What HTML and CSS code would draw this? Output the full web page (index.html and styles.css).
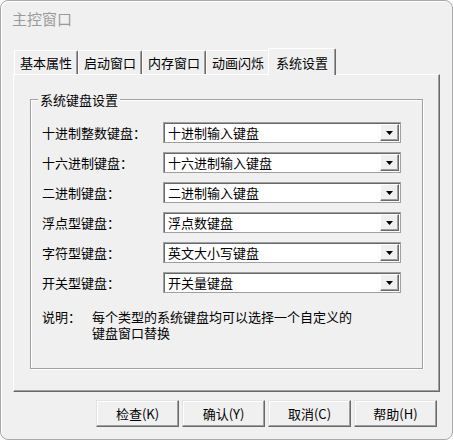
FILE: index.html
```html
<!DOCTYPE html>
<html lang="zh-CN">
<head>
<meta charset="utf-8">
<title>主控窗口</title>
<link rel="stylesheet" href="styles.css">
</head>
<body>
<div class="window">
  <div class="titlebar"><span class="title">主控窗口</span></div>
  <div class="tabs">
    <div class="tab">基本属性</div>
    <div class="tab">启动窗口</div>
    <div class="tab">内存窗口</div>
    <div class="tab">动画闪烁</div>
    <div class="tab active">系统设置</div>
  </div>
  <div class="panel">
    <fieldset class="group">
      <legend>系统键盘设置</legend>
      <div class="row"><span class="label">十进制整数键盘：</span><div class="combo"><span class="value">十进制输入键盘</span><span class="drop"><svg width="7" height="4" viewBox="0 0 7 4"><polygon points="0,0 7,0 3.5,4" fill="#000"/></svg></span></div></div>
      <div class="row"><span class="label">十六进制键盘：</span><div class="combo"><span class="value">十六进制输入键盘</span><span class="drop"><svg width="7" height="4" viewBox="0 0 7 4"><polygon points="0,0 7,0 3.5,4" fill="#000"/></svg></span></div></div>
      <div class="row"><span class="label">二进制键盘：</span><div class="combo"><span class="value">二进制输入键盘</span><span class="drop"><svg width="7" height="4" viewBox="0 0 7 4"><polygon points="0,0 7,0 3.5,4" fill="#000"/></svg></span></div></div>
      <div class="row"><span class="label">浮点型键盘：</span><div class="combo"><span class="value">浮点数键盘</span><span class="drop"><svg width="7" height="4" viewBox="0 0 7 4"><polygon points="0,0 7,0 3.5,4" fill="#000"/></svg></span></div></div>
      <div class="row"><span class="label">字符型键盘：</span><div class="combo"><span class="value">英文大小写键盘</span><span class="drop"><svg width="7" height="4" viewBox="0 0 7 4"><polygon points="0,0 7,0 3.5,4" fill="#000"/></svg></span></div></div>
      <div class="row"><span class="label">开关型键盘：</span><div class="combo"><span class="value">开关量键盘</span><span class="drop"><svg width="7" height="4" viewBox="0 0 7 4"><polygon points="0,0 7,0 3.5,4" fill="#000"/></svg></span></div></div>
      <div class="note"><span class="note-label">说明：</span><span class="note-text">每个类型的系统键盘均可以选择一个自定义的<br>键盘窗口替换</span></div>
    </fieldset>
  </div>
  <div class="buttons">
    <div class="btn">检查(K)</div>
    <div class="btn">确认(Y)</div>
    <div class="btn">取消(C)</div>
    <div class="btn">帮助(H)</div>
  </div>
</div>
</body>
</html>
```
FILE: styles.css
```css
html, body {
  margin: 0;
  background: #ffffff;
}
body {
  font-family: "Noto Sans CJK SC", "Noto Sans", sans-serif;
  font-size: 13px;
  color: #000;
}
.window {
  box-sizing: border-box;
  width: 453px;
  height: 440px;
  border: 1px solid #a9a9a9;
  border-radius: 8px;
  background: #f0f0f0;
  box-shadow: inset 1px 1px 0 #ffffff;
  overflow: hidden;
}
.titlebar {
  height: 47px;
  padding-left: 11px;
  display: flex;
  align-items: flex-start;
}
.title {
  font-size: 15px;
  line-height: 20px;
  margin-top: 8px;
  color: #9a9a9a;
}
.tabs {
  display: flex;
  align-items: flex-end;
  height: 26px;
  margin-left: 13px;
}
.tab {
  box-sizing: border-box;
  height: 24px;
  padding: 0 5px;
  border-left: 1px solid #ffffff;
  border-top: 1px solid #ffffff;
  border-right: 1px solid #696969;
  box-shadow: inset -1px 0 0 #a0a0a0;
  border-radius: 2px 2px 0 0;
  display: flex;
  align-items: center;
  line-height: 15px;
  background: #f0f0f0;
}
.tab.active {
  height: 27px;
  padding: 0 7px;
  margin: 0 -2px -1px -2px;
  position: relative;
  z-index: 1;
}
.panel {
  box-sizing: border-box;
  width: 427px;
  height: 318px;
  margin-left: 12px;
  border: 1px solid;
  border-color: #ffffff #696969 #696969 #ffffff;
  box-shadow: inset -1px -1px 0 #a0a0a0;
  padding: 17px 0 0 16px;
}
.group {
  box-sizing: border-box;
  width: 393px;
  height: 277px;
  margin: 0;
  padding: 15px 0 0 11px;
  border: 1px solid #a0a0a0;
  box-shadow: 1px 1px 0 #ffffff, inset 1px 1px 0 #ffffff;
  min-inline-size: auto;
}
.group legend {
  padding: 0 2px;
  margin-left: -4px;
  line-height: 15px;
  background: #f0f0f0;
}
.row {
  display: flex;
  align-items: center;
  height: 21px;
  margin-bottom: 9px;
}
.label {
  width: 121px;
  line-height: 15px;
}
.combo {
  box-sizing: border-box;
  width: 238px;
  height: 21px;
  background: #ffffff;
  border: 1px solid #a0a0a0;
  box-shadow: inset 1px 1px 0 #696969;
  display: flex;
  align-items: center;
  justify-content: space-between;
  padding: 1px 1px 1px 4px;
  line-height: 15px;
}
.drop {
  box-sizing: border-box;
  width: 19px;
  height: 17px;
  background: #f0f0f0;
  border: 1px solid;
  border-color: #ffffff #696969 #696969 #ffffff;
  box-shadow: inset -1px -1px 0 #a0a0a0;
  display: flex;
  align-items: center;
  justify-content: center;
}
.drop svg {
  display: block;
}
.note {
  display: flex;
  line-height: 16px;
  margin-top: 16px;
}
.note-label {
  width: 50px;
  flex: none;
}
.buttons {
  display: flex;
  justify-content: flex-end;
  gap: 3px;
  padding-right: 15px;
  margin-top: 8px;
}
.btn {
  box-sizing: border-box;
  width: 83px;
  height: 27px;
  border: 1px solid;
  border-color: #e3e3e3 #696969 #696969 #e3e3e3;
  box-shadow: inset -1px -1px 0 #a0a0a0, inset 1px 1px 0 #ffffff;
  background: #f0f0f0;
  display: flex;
  align-items: center;
  justify-content: center;
  line-height: 15px;
}
```
